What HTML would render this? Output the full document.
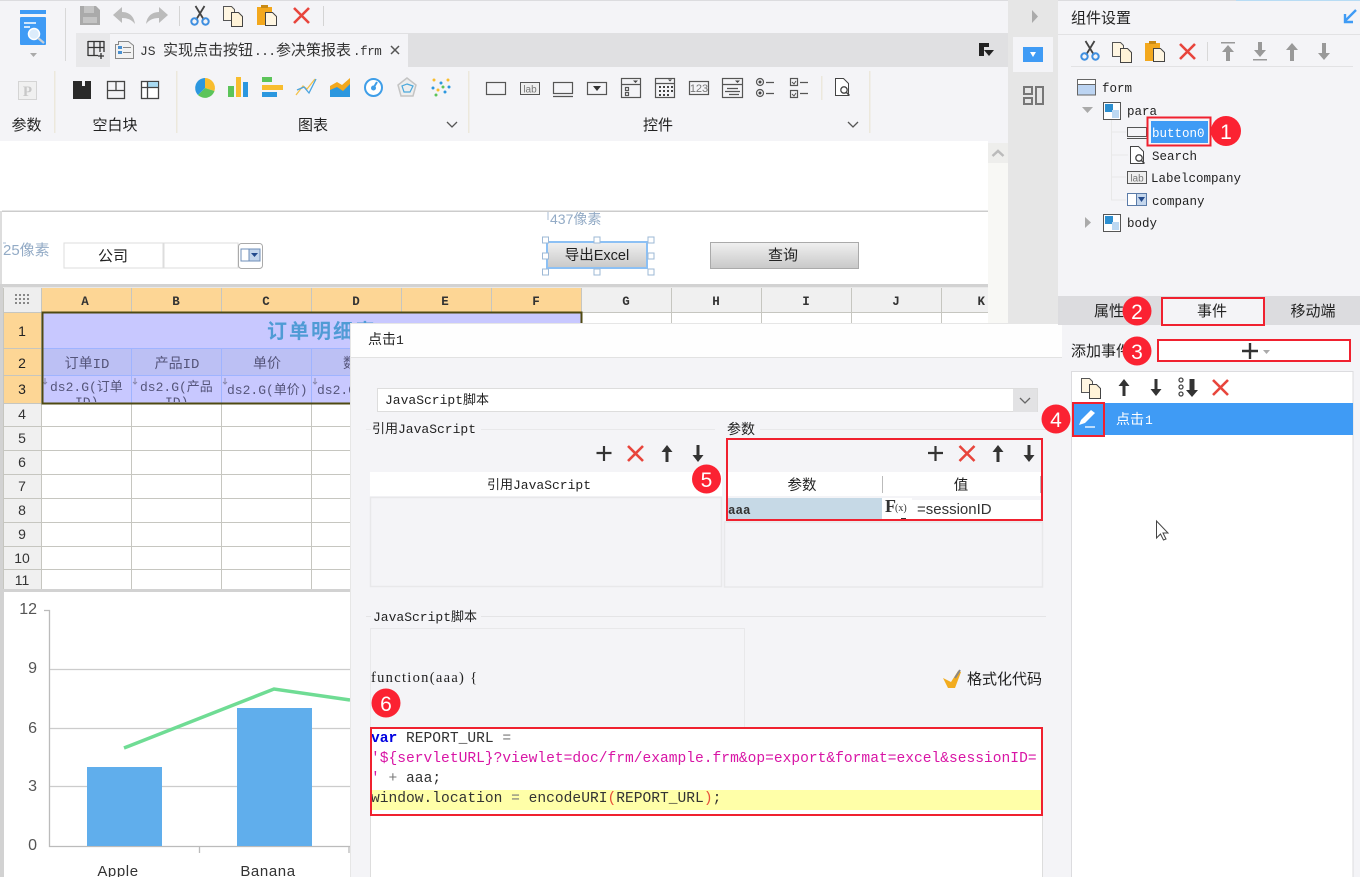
<!DOCTYPE html>
<html lang="zh"><head><meta charset="utf-8"><title>组件设置</title>
<style>
html,body{margin:0;padding:0;width:1360px;height:877px;overflow:hidden;background:#f4f4f7}
svg{display:block;position:absolute;left:0;top:0;filter:blur(.3px)}
text{font-family:"Liberation Sans","Noto Sans CJK SC",sans-serif;fill:#222;font-size:15px}
.m{font-family:"Liberation Mono","Noto Sans CJK SC",monospace;font-size:13px}
.h{font-family:"Liberation Mono","Noto Sans CJK SC",monospace;font-size:12.5px;font-weight:bold;text-anchor:middle;fill:#333}
.c{text-anchor:middle}
.t{font-family:"Liberation Mono","Noto Sans CJK SC",monospace;font-size:12.5px;fill:#222}
.cell{font-family:"Liberation Mono","Noto Sans CJK SC",monospace;font-size:13px;fill:#55557a}
.code{font-family:"Liberation Mono",monospace;font-size:14.6px;fill:#333}
.ax{font-size:16px;fill:#555;text-anchor:end}
.badge{font-size:21px;fill:#fff;text-anchor:middle}
.px{fill:#93abc6;font-size:15px}
</style></head><body>
<svg width="1360" height="877" viewBox="0 0 1360 877" xmlns="http://www.w3.org/2000/svg">
<defs>
<g id="cut"><path d="M5.5 0L14 14M14.5 0L6 14" stroke="#444" stroke-width="1.8" fill="none"/><circle cx="4.5" cy="15.5" r="3.2" fill="none" stroke="#3f8fe0" stroke-width="2"/><circle cx="15.5" cy="15.5" r="3.2" fill="none" stroke="#3f8fe0" stroke-width="2"/></g>
<g id="copy"><path d="M.5.5h8l3 3v11H.5z" fill="#fff6e2" stroke="#555"/><path d="M8.5 6.5h7l4 4v10h-11z" fill="#fff3d8" stroke="#444"/></g>
<g id="paste"><rect x="0" y="2" width="15" height="18" fill="#f3a81d"/><rect x="4" y="0" width="7" height="3" fill="#c98a14"/><path d="M8.5 7.5h7l4 4v9h-11z" fill="#fff6e2" stroke="#444"/></g>
<path id="x" d="M0 0L15 15M15 0L0 15" stroke="#e8453c" stroke-width="2.6" fill="none"/>
<path id="up" d="M6 0L11.500 7H7.500V17H4.500V7H.5z" fill="#333"/>
<path id="down" d="M6 17L11.500 10H7.500V0H4.500V10H.5z" fill="#333"/>
<path id="plus" d="M0 7h15M7.5 0v15" stroke="#333" stroke-width="2.2" fill="none"/>
<g id="blk"><rect x=".5" y=".5" width="17" height="17" fill="#fff" stroke="#555"/><rect x="2" y="2" width="8" height="8" fill="#2d8fd0"/><rect x="9" y="8" width="7" height="8" fill="#bcd8f2"/></g>
<g id="docs"><path d="M.5.5h8l5 5v12H.5z" fill="#fff" stroke="#444"/><circle cx="9" cy="12" r="3.2" fill="#fff" stroke="#444" stroke-width="1.3"/><path d="M11.5 14.5l3 3" stroke="#444" stroke-width="1.5"/></g>
<g id="lab"><rect x=".5" y=".5" width="19" height="12" fill="#eee" stroke="#555"/><text x="10" y="10.5" class="c" style="font-size:10px;fill:#777">lab</text></g>
</defs>

<!-- ===== base ===== -->
<rect width="1360" height="877" fill="#f4f4f7"/>
<rect width="1360" height="1" fill="#dcdcdf"/>
<rect x="1236" y="0" width="124" height="1" fill="#b8dcf4"/>
<rect x="76" y="33" width="934" height="34" fill="#e0e0e2"/>
<rect x="76" y="33" width="34" height="34" fill="#e8e8ea"/>
<rect x="110" y="34" width="298" height="33" fill="#f4f4f7"/>
<rect x="1008" y="0" width="50" height="325" fill="#e6e6e6"/>
<rect x="1013" y="37" width="40" height="35" fill="#f4f4f7"/>

<!-- logo -->
<rect x="20" y="10" width="26" height="4" fill="#3f9bf5"/>
<rect x="20" y="17" width="26" height="28" rx="1" fill="#3f9bf5"/>
<path d="M24 23h12M24 27h6" stroke="#fff" stroke-width="1.4"/>
<circle cx="34" cy="34" r="5.5" fill="#dcecfb" stroke="#fff" stroke-width="1.5"/>
<path d="M38 38l6 5" stroke="#c8d0d8" stroke-width="2.2"/>
<path d="M30 53h7l-3.500 4z" fill="#aaa"/>
<rect x="65" y="8" width="1" height="53" fill="#d8d8d8"/>

<!-- quick tools -->
<path d="M80 6h16l4 4v15H80z" fill="#aaa"/><rect x="84" y="6" width="10" height="7" fill="#c4c4c4"/><rect x="83" y="17" width="14" height="6" fill="#c4c4c4"/>
<path d="M113 15l9-8v5c7 0 12 4 13 12-3-4-7-6-13-6v5z" fill="#bbb"/>
<path d="M168 15l-9-8v5c-7 0-12 4-13 12 3-4 7-6 13-6v5z" fill="#bbb"/>
<rect x="179" y="6" width="1" height="20" fill="#d4d4d4"/>
<use href="#cut" x="190" y="6"/><use href="#copy" x="223" y="6"/><use href="#paste" x="257" y="5"/><use href="#x" x="294" y="8"/>
<rect x="323" y="6" width="1" height="20" fill="#d4d4d4"/>

<!-- tab -->
<path d="M88 41.500h16M88 47.500h16M88 41v15M94 41v15M100 41v11M104 41v11M88 55.500h10M101 53v6M98 56h6" stroke="#333" stroke-width="1.300" fill="none"/>
<path d="M115.500 44.500h3v-3h10l5 4v13h-18z" fill="#f2f2f2" stroke="#888"/><rect x="118" y="46" width="4" height="3" fill="#4a90d0"/><rect x="118" y="51" width="4" height="3" fill="#4a90d0"/><path d="M123 47.500h8M123 52.500h8" stroke="#888"/>
<text x="140" y="55" class="m" style="font-size:13px;fill:#333">JS</text>
<text x="163" y="55" style="font-size:15px;fill:#333">实现点击按钮</text>
<text x="254" y="55" class="m" style="fill:#333;letter-spacing:-.7px">...</text>
<text x="276" y="55" style="font-size:15px;fill:#333">参决策报表</text>
<text x="353" y="55" class="m" style="fill:#333;font-size:12.500px;letter-spacing:-.4px">.frm</text>
<path d="M391 46l8 8M399 46l-8 8" stroke="#555" stroke-width="1.500"/>
<path d="M979 43h10v4h-5v9h-5z" fill="#222"/><path d="M984 50h10l-5 6z" fill="#222"/>

<!-- ribbon: params + blank -->
<rect x="18.500" y="81.500" width="18" height="18" fill="#f0f0f0" stroke="#d4d4d4"/>
<text x="27.500" y="96" class="c" style="font-family:'Liberation Serif',serif;font-weight:bold;font-size:15px;fill:#c8c8c8">P</text>
<rect x="54" y="71" width="1.500" height="62" fill="#ece8dc"/>
<path d="M73 81h9v5h3v-5h6v18H73z" fill="#2a2a2a"/>
<rect x="107.500" y="81.500" width="17" height="17" fill="none" stroke="#444" stroke-width="1.300"/><path d="M107 90.500h18M116 81v9.500" stroke="#444" stroke-width="1.300"/>
<rect x="141.500" y="81.500" width="17" height="17" fill="#fff" stroke="#444" stroke-width="1.300"/><rect x="147" y="82" width="11" height="5" fill="#a8daf2"/><path d="M141 87.500h18M147.500 82v16" stroke="#444" stroke-width="1.300"/>
<rect x="176" y="71" width="1.500" height="62" fill="#ece8dc"/>
<text x="26.500" y="130" class="c">参数</text><text x="115" y="130" class="c">空白块</text><text x="313" y="130" class="c">图表</text><text x="658" y="130" class="c">控件</text>
<path d="M447 122l5 5 5-5M848 122l5 5 5-5" stroke="#555" stroke-width="1.300" fill="none"/>

<!-- chart icons -->
<path d="M205 88V78a10 10 0 0 1 9.500 13z" fill="#f8bd2e"/><path d="M205 88l9.500 3a10 10 0 0 1-16.500 4z" fill="#5cc45a"/><path d="M205 88l-7 7a10 10 0 0 1 7-17z" fill="#2b97df"/>
<rect x="228" y="86" width="6" height="11" fill="#5cc45a"/><rect x="236" y="77" width="5" height="20" fill="#f8bd2e"/><rect x="243" y="82" width="5" height="15" fill="#2b97df"/>
<rect x="262" y="77" width="10" height="5" fill="#5cc45a"/><rect x="262" y="85" width="21" height="5" fill="#f8bd2e"/><rect x="262" y="92" width="15" height="5" fill="#2b97df"/>
<path d="M296 95l7-9 4 3 8-10" stroke="#f4c24a" stroke-width="1.300" fill="none"/><path d="M297 90l7-3 5 6 7-14" stroke="#4aa4e0" stroke-width="1.300" fill="none"/>
<path d="M330 86l7-4 5 3 8-7v19h-20z" fill="#f3a81d"/><path d="M330 90l7-3 6 4 7-7v13h-20z" fill="#2b97df"/>
<circle cx="373.500" cy="87.500" r="8.500" fill="#fff" stroke="#3f9ee8" stroke-width="2"/><circle cx="373.500" cy="88" r="2.500" fill="#3f9ee8"/><path d="M374 87l3-5" stroke="#3f9ee8" stroke-width="2"/>
<path d="M407 78l9 7-3 11h-12l-3-11z" fill="#eee" stroke="#c4c4c4" stroke-width="1.500"/><path d="M407 84l6 2-3 6h-6l-2-6z" fill="none" stroke="#4aa8dc" stroke-width="1.200"/>
<g><circle cx="434" cy="80" r="1.500" fill="#f8bd2e"/><circle cx="441" cy="83" r="1.500" fill="#2b97df"/><circle cx="448" cy="80" r="1.500" fill="#f8bd2e"/><circle cx="433" cy="88" r="1.500" fill="#2b97df"/><circle cx="443" cy="87" r="1.500" fill="#5cc45a"/><circle cx="449" cy="87" r="1.500" fill="#2b97df"/><circle cx="438" cy="90" r="1.500" fill="#f8bd2e"/><circle cx="445" cy="92" r="1.500" fill="#2b97df"/><circle cx="436" cy="95" r="1.500" fill="#5cc45a"/></g>
<rect x="468" y="71" width="1.500" height="62" fill="#ece8dc"/>

<!-- control icons -->
<g fill="none" stroke="#555" stroke-width="1.200">
<rect x="486.500" y="82.500" width="19" height="12"/>
<rect x="553.500" y="82.500" width="19" height="11"/><path d="M553 96.500h20"/>
<rect x="587.500" y="82.500" width="19" height="12"/>
<rect x="621.500" y="78.500" width="19" height="19"/><path d="M621 84.500h20"/><rect x="625.500" y="87.500" width="3" height="3"/><rect x="625.500" y="92.500" width="3" height="3"/>
<rect x="655.500" y="78.500" width="19" height="19"/><path d="M655 83.500h20"/>
<rect x="689.500" y="81.500" width="19" height="13"/>
<rect x="722.500" y="78.500" width="20" height="19"/><path d="M722 84.500h21M727 88.500h11M725 91.500h15M729 94.500h10"/>
<circle cx="760" cy="82" r="3.500"/><circle cx="760" cy="93" r="3.500"/><path d="M766 82.500h8M766 93.500h8"/>
<rect x="790.500" y="78.500" width="7" height="7"/><rect x="790.500" y="90.500" width="7" height="7"/><path d="M800 82.500h8M800 93.500h8"/>
</g>
<use href="#lab" x="520" y="82"/>
<path d="M593 86h8l-4 5z" fill="#333"/>
<path d="M633 80.500h5l-2.500 2.500zM668 79.500h4l-2 2zM735 80.500h5l-2.500 2.500z" fill="#444"/>
<g fill="#444"><rect x="659" y="86" width="2" height="2"/><rect x="663" y="86" width="2" height="2"/><rect x="667" y="86" width="2" height="2"/><rect x="671" y="86" width="2" height="2"/><rect x="659" y="90" width="2" height="2"/><rect x="663" y="90" width="2" height="2"/><rect x="667" y="90" width="2" height="2"/><rect x="671" y="90" width="2" height="2"/><rect x="659" y="94" width="2" height="2"/><rect x="663" y="94" width="2" height="2"/><rect x="667" y="94" width="2" height="2"/><circle cx="760" cy="82" r="1.500"/><circle cx="760" cy="93" r="1.500"/></g>
<text x="699" y="92" class="c" style="font-size:11px;fill:#777">123</text>
<path d="M792 82l2 2 2-3M792 94l2 2 2-3" stroke="#555" fill="none"/>
<rect x="821" y="76" width="1.500" height="24" fill="#ece8dc"/>
<use href="#docs" x="835" y="78"/>
<rect x="869" y="71" width="1.500" height="62" fill="#ece8dc"/>

<!-- side strip -->
<path d="M1032 10l6 6.500-6 6.500z" fill="#aaa"/>
<rect x="1023" y="47" width="20" height="15" fill="#3f9bf5"/><path d="M1030 52h6l-3 5z" fill="#fff"/>
<g fill="none" stroke="#777" stroke-width="2"><rect x="1024" y="87" width="8" height="7"/><rect x="1024" y="98" width="8" height="6"/><rect x="1036" y="87" width="7" height="17"/></g>

<!-- ===== canvas ===== -->
<rect x="0" y="141" width="988" height="450" fill="#fff"/>
<rect x="988" y="143" width="20" height="182" fill="#f8f8f5"/><rect x="988" y="143" width="20" height="20" fill="#eeeeec"/>
<path d="M992.500 156l5.500-5 5.500 5" stroke="#bbb" stroke-width="2.500" fill="none"/>
<rect x="2" y="210.500" width="986" height="1.500" fill="#ccc"/>
<rect x="0" y="211" width="2" height="75" fill="#ddd"/>

<!-- para pane -->
<path d="M548 212v8" stroke="#a9bdd4"/>
<text x="550" y="224" class="px" style="font-size:14px">437像素</text>
<path d="M3 243h3" stroke="#a9bdd4"/>
<text x="3" y="255" class="px" style="font-size:15px">25像素</text>
<rect x="64" y="243" width="99" height="25" fill="#fff" stroke="#ddd"/>
<text x="113" y="261" class="c">公司</text>
<rect x="164" y="243" width="74" height="25" fill="#fff" stroke="#ddd"/>
<rect x="238.500" y="243.500" width="24" height="25" rx="3" fill="#fff" stroke="#aaa"/>
<rect x="241" y="249" width="8" height="12" fill="#fff" stroke="#6f8fb8"/><rect x="249" y="249" width="11" height="12" fill="#c4d6ec" stroke="#6f8fb8"/><path d="M251 253h7l-3.500 4z" fill="#234a8c"/>

<linearGradient id="btn" x1="0" y1="0" x2="0" y2="1"><stop offset="0" stop-color="#f0f0f0"/><stop offset="1" stop-color="#c8c8c8"/></linearGradient>
<rect x="547" y="242" width="100" height="26" fill="url(#btn)" stroke="#8cc0f4" stroke-width="2"/>
<text x="597" y="260" class="c" style="font-size:14.500px">导出Excel</text>
<g fill="#fff" stroke="#9db8d6"><rect x="542.500" y="237" width="6" height="6"/><rect x="594" y="237" width="6" height="6"/><rect x="648" y="237" width="6" height="6"/><rect x="542.500" y="253" width="6" height="6"/><rect x="648" y="253" width="6" height="6"/><rect x="542.500" y="269" width="6" height="6"/><rect x="594" y="269" width="6" height="6"/><rect x="648" y="269" width="6" height="6"/></g>
<rect x="710.500" y="242.500" width="148" height="26" fill="url(#btn)" stroke="#aaa"/>
<text x="783" y="260" class="c">查询</text>

<!-- grid -->
<rect x="0" y="284" width="988" height="3.500" fill="#d2d2d2"/>
<rect x="0" y="284" width="3" height="306" fill="#d2d2d2"/>
<rect x="3" y="288" width="39" height="25" fill="#eeeeee"/>
<rect x="42" y="288" width="540" height="24" fill="#fdd695"/>
<rect x="582" y="288" width="406" height="24" fill="#f0f0f0"/>
<rect x="3" y="312" width="39" height="91" fill="#fdd695"/>
<rect x="3" y="403" width="39" height="187" fill="#f0f0f0"/>
<g fill="#888"><rect x="15" y="294" width="2" height="2"/><rect x="19" y="294" width="2" height="2"/><rect x="23" y="294" width="2" height="2"/><rect x="27" y="294" width="2" height="2"/><rect x="15" y="298" width="2" height="2"/><rect x="19" y="298" width="2" height="2"/><rect x="23" y="298" width="2" height="2"/><rect x="27" y="298" width="2" height="2"/><rect x="15" y="302" width="2" height="2"/><rect x="19" y="302" width="2" height="2"/><rect x="23" y="302" width="2" height="2"/><rect x="27" y="302" width="2" height="2"/></g>
<g stroke="#c6c6c0" fill="none">
<path d="M3.500 288V590M41.500 288V590M131.500 288V590M221.500 288V590M311.500 288V590M401.500 288V590M491.500 288V590M581.500 288V590M671.500 288V325M761.500 288V325M851.500 288V325M941.500 288V325"/>
<path d="M3 312.500H988M3 348.500H42M3 375.500H42M3 403.500H582M3 426.500H350M3 450.500H350M3 474.500H350M3 498.500H350M3 522.500H350M3 546.500H350M3 569.500H350"/>
</g>
<text x="85" y="305" class="h">A</text><text x="176" y="305" class="h">B</text><text x="266" y="305" class="h">C</text><text x="356" y="305" class="h">D</text><text x="445" y="305" class="h">E</text><text x="536" y="305" class="h">F</text><text x="626" y="305" class="h">G</text><text x="716" y="305" class="h">H</text><text x="806" y="305" class="h">I</text><text x="896" y="305" class="h">J</text><text x="985" y="305" class="h" style="text-anchor:end">K</text>
<g style="font-size:14px">
<text x="22" y="336" class="c" style="font-size:14px">1</text><text x="22" y="368" class="c" style="font-size:14px">2</text><text x="22" y="394" class="c" style="font-size:14px">3</text>
<text x="22" y="419" class="c" style="font-size:14px;fill:#333">4</text><text x="22" y="443" class="c" style="font-size:14px;fill:#333">5</text><text x="22" y="467" class="c" style="font-size:14px;fill:#333">6</text><text x="22" y="491" class="c" style="font-size:14px;fill:#333">7</text><text x="22" y="515" class="c" style="font-size:14px;fill:#333">8</text><text x="22" y="539" class="c" style="font-size:14px;fill:#333">9</text><text x="22" y="563" class="c" style="font-size:14px;fill:#333">10</text><text x="22" y="585" class="c" style="font-size:14px;fill:#333">11</text>
</g>

<!-- styled table -->
<rect x="43" y="313" width="538" height="90" fill="#c8c8ff"/>
<rect x="43" y="349" width="538" height="27" fill="#bcc0f4"/>
<path d="M43 348.500H581M43 375.500H581M131.500 349V403M221.500 349V403M311.500 349V403M401.500 349V403M491.500 349V403" stroke="#9fb4ff"/>
<text x="267" y="338" style="font-size:20px;font-weight:bold;fill:#4f9bd5;letter-spacing:2px">订单明细表</text>
<text x="87" y="368" class="c cell" style="font-size:14px">订单ID</text><text x="177" y="368" class="c cell" style="font-size:14px">产品ID</text><text x="267" y="368" class="c cell" style="font-size:14px">单价</text><text x="357" y="368" class="c cell" style="font-size:14px">数量</text>
<clipPath id="r3"><rect x="43" y="376" width="538" height="26"/></clipPath>
<g clip-path="url(#r3)">
<text x="50" y="391" class="cell">ds2.G(订单</text><text x="75" y="406" class="cell">ID)</text>
<text x="140" y="391" class="cell">ds2.G(产品</text><text x="165" y="406" class="cell">ID)</text>
<text x="227" y="394" class="cell">ds2.G(单价)</text><text x="317" y="394" class="cell">ds2.G(数量)</text>
<path d="M45 378v6m-2-2l2 2 2-2M135 378v6m-2-2l2 2 2-2M225 378v6m-2-2l2 2 2-2M315 378v6m-2-2l2 2 2-2" stroke="#8888aa" fill="none"/>
</g>
<rect x="42.500" y="312.500" width="539" height="91" fill="none" stroke="#4f4a12" stroke-width="2"/>

<!-- chart -->
<rect x="3" y="589" width="347" height="3.500" fill="#d2d2d2"/>
<rect x="0" y="589" width="4" height="288" fill="#d2d2d2"/>
<rect x="4" y="592" width="346" height="285" fill="#fff"/>
<path d="M49 669.500H350M49 728.500H350M49 786.500H350" stroke="#ccc" stroke-width="1.300"/>
<path d="M44 610.500h5.500V846.500H350M199.500 847v6M349 847v6" stroke="#bbb" stroke-width="1.300" fill="none"/>
<rect x="87" y="767" width="75" height="79" fill="#60aeec"/><rect x="237" y="708" width="75" height="138" fill="#60aeec"/>
<path d="M124 748L274 689L350 700" fill="none" stroke="#6fdc94" stroke-width="3.500"/>
<text x="37" y="614" class="ax">12</text><text x="37" y="673" class="ax">9</text><text x="37" y="733" class="ax">6</text><text x="37" y="791" class="ax">3</text><text x="37" y="850" class="ax">0</text>
<text x="118" y="876" class="c" style="font-size:15px;fill:#333;letter-spacing:.6px">Apple</text><text x="268" y="876" class="c" style="font-size:15px;fill:#333;letter-spacing:.6px">Banana</text>

<!-- ===== dialog ===== -->
<rect x="350" y="323" width="712" height="554" fill="#f4f4f7"/>
<rect x="350" y="323" width="712" height="34" fill="#fefefe"/>
<path d="M350 357.500H1062" stroke="#e2e2e2"/>
<path d="M350.500 323V877M350 323.500H1062" stroke="#e6e6e6"/>
<text x="368" y="344" style="font-size:14px">点击</text><text x="396" y="344" class="m" style="font-size:13px">1</text>

<rect x="377.500" y="388.500" width="660" height="23" fill="#fff" stroke="#ddd"/>
<rect x="1013" y="389" width="24" height="23" fill="#e2e2e4"/>
<path d="M1020 398l5 5 5-5" stroke="#666" stroke-width="1.300" fill="none"/>
<text x="385" y="404" class="m">JavaScript脚本</text>

<path d="M366 429.500H715M760 429.500H1060" stroke="#e8e8ea"/>
<rect x="371" y="420" width="110" height="17" fill="#f4f4f7"/>
<text x="372" y="433" class="m">引用JavaScript</text>
<text x="727" y="434" style="font-size:14px">参数</text>

<use href="#plus" x="596.500" y="446"/><use href="#x" x="628" y="446"/><use href="#up" x="661" y="445"/><use href="#down" x="692" y="445"/>
<use href="#plus" x="928" y="446"/><use href="#x" x="959.500" y="446"/><use href="#up" x="992" y="445"/><use href="#down" x="1023" y="445"/>

<rect x="370" y="472" width="352" height="24" fill="#fff"/>
<text x="539" y="489" class="c m">引用JavaScript</text>
<rect x="370.500" y="497.500" width="351" height="89" fill="#f4f4f7" stroke="#e8e8ea" stroke-width="1.500"/>

<rect x="724.500" y="522" width="318" height="65" fill="#f4f4f7" stroke="#e8e8ea" stroke-width="1.500"/>
<rect x="727" y="472" width="314" height="24" fill="#fff"/>
<path d="M882.500 476v17M1040.500 476v17" stroke="#bbb"/>
<text x="802" y="490" class="c" style="font-size:14.500px">参数</text><text x="961" y="490" class="c" style="font-size:14.500px">值</text>
<rect x="727" y="498" width="155" height="22" fill="#c6d9e6"/>
<rect x="882" y="498" width="30" height="22" fill="#fff"/><rect x="912" y="500" width="128" height="20" fill="#fff"/>
<text x="728" y="514" class="m" style="font-size:12.500px;font-weight:bold;fill:#333">aaa</text>
<text x="885" y="512" style="font-family:'Liberation Serif',serif;font-size:18px;font-weight:bold;fill:#333">F</text><text x="895" y="511" style="font-family:'Liberation Serif',serif;font-size:10px;fill:#333">(x)</text>
<rect x="901" y="518" width="5" height="2" fill="#333"/>
<text x="917" y="514" style="font-size:15px;fill:#333">=sessionID</text>

<path d="M366 616.500H1046" stroke="#e4e4e6"/>
<rect x="371" y="608" width="110" height="17" fill="#f4f4f7"/>
<text x="373" y="621" class="m">JavaScript脚本</text>
<rect x="370.500" y="628.500" width="374" height="110" fill="#f4f4f7" stroke="#e8e8ea"/>
<text x="371" y="682" style="font-family:'Liberation Serif',serif;font-size:14.500px;fill:#222;letter-spacing:1.300px">function(aaa) {</text>
<path d="M943 678l8 4 7-11 3 1-6 16h-7z" fill="#f2ac1f"/><path d="M955 678l5-8" stroke="#888" stroke-width="2"/>
<text x="967" y="684" style="font-size:15px">格式化代码</text>

<rect x="370" y="728" width="673" height="149" fill="#fff"/>
<rect x="371" y="790" width="671" height="20" fill="#ffffa8"/>
<path d="M370.500 728V877M1042.500 816V877" stroke="#ddd"/>
<text x="371" y="742" class="code"><tspan fill="#0000e0" font-weight="bold">var</tspan> REPORT_URL <tspan fill="#777">=</tspan></text>
<text x="371" y="762" class="code" style="fill:#d815a5">'${servletURL}?viewlet=doc/frm/example.frm&amp;op=export&amp;format=excel&amp;sessionID=</text>
<text x="371" y="782" class="code"><tspan fill="#d815a5">'</tspan> <tspan fill="#777">+</tspan> aaa;</text>
<text x="371" y="802" class="code">window.location <tspan fill="#777">=</tspan> encodeURI<tspan fill="#e8503a">(</tspan>REPORT_URL<tspan fill="#e8503a">)</tspan>;</text>

<!-- ===== right panel ===== -->
<text x="1071" y="23">组件设置</text>
<path d="M1345 21l11-11M1345 14v8h8" stroke="#3f9bf5" stroke-width="2.400" fill="none"/>
<path d="M1058 34.500H1360" stroke="#e2e2e4"/>
<use href="#cut" x="1080" y="41"/><use href="#copy" x="1112" y="42"/><use href="#paste" x="1145" y="41"/><use href="#x" x="1180" y="44"/>
<rect x="1207" y="42" width="1" height="19" fill="#d8d8d8"/>
<g fill="#999"><rect x="1221" y="42" width="14" height="1.500"/><path d="M1228 45l6 7h-4v9h-4v-9h-4z"/><path d="M1260 57l6-7h-4v-8h-4v8h-4z"/><rect x="1253" y="59" width="14" height="1.500"/><path d="M1292 43l6 7h-4v11h-4V50h-4z"/><path d="M1324 60l6-7h-4V43h-4v10h-4z"/></g>
<path d="M1071 66.500H1353" stroke="#e2e2e4"/>

<rect x="1077.500" y="79.500" width="18" height="15.500" fill="#bcd4f2" stroke="#666"/><rect x="1078" y="80" width="17" height="4" fill="#fff"/><path d="M1077 84.500h19" stroke="#666"/>
<text x="1102" y="92" class="t">form</text>
<path d="M1082 107h11l-5.500 6z" fill="#aaa"/>
<use href="#blk" x="1103" y="102"/>
<text x="1127" y="115" class="t">para</text>
<path d="M1111.500 120V200M1111 132h15M1111 155h17M1111 177h15M1111 200h15" stroke="#e8e8e8" fill="none"/>
<rect x="1127.500" y="127.500" width="19" height="9" fill="#f4f4f7" stroke="#555"/><path d="M1127 138.500h20" stroke="#555"/>
<rect x="1147.500" y="117.500" width="63" height="28" fill="none" stroke="#f0212f" stroke-width="2"/>
<rect x="1151" y="121" width="57" height="22" fill="#3f9bf5"/>
<text x="1152" y="137" class="t" style="fill:#fff">button0</text>
<use href="#docs" x="1130" y="146"/>
<text x="1152" y="160" class="t">Search</text>
<use href="#lab" x="1127" y="171"/>
<text x="1151" y="182" class="t">Labelcompany</text>
<rect x="1127.500" y="193.500" width="9" height="12" fill="#fff" stroke="#5a7ba8"/><rect x="1136.500" y="193.500" width="10" height="12" fill="#c4d6ec" stroke="#5a7ba8"/><path d="M1138 197h7l-3.500 5z" fill="#234a8c"/>
<text x="1152" y="205" class="t">company</text>
<path d="M1085 217l6 5.500-6 5.500z" fill="#aaa"/>
<use href="#blk" x="1103" y="214"/>
<text x="1127" y="227" class="t">body</text>

<!-- tabs -->
<rect x="1058" y="296" width="302" height="29" fill="#dcdcdf"/>
<rect x="1062" y="325" width="298" height="552" fill="#f4f4f7"/>
<rect x="1162" y="298" width="102" height="27" fill="#f4f4f7" stroke="#f0212f" stroke-width="2"/>
<text x="1109" y="316" class="c">属性</text><text x="1212" y="316" class="c">事件</text><text x="1313" y="316" class="c">移动端</text>
<text x="1071" y="356">添加事件</text>
<rect x="1158" y="340" width="192" height="21" fill="#fff" stroke="#f0212f" stroke-width="2"/>
<path d="M1242 351h16M1250 343v16" stroke="#333" stroke-width="2.400"/><path d="M1263 350h7l-3.500 4z" fill="#aaa"/>
<rect x="1071.500" y="371.500" width="281.500" height="506" fill="#fff" stroke="#dcdcdf"/>
<use href="#copy" x="1081" y="378"/><use href="#up" x="1118" y="379"/><use href="#down" x="1150" y="379"/>
<g fill="none" stroke="#444" stroke-width="1.300"><circle cx="1181" cy="380" r="2"/><circle cx="1181" cy="387" r="2"/><circle cx="1181" cy="394" r="2"/></g>
<path d="M1192 397l6-7h-3.500v-11h-5v11H1186z" fill="#333"/>
<use href="#x" x="1213" y="380"/>
<rect x="1072" y="403" width="281" height="32" fill="#3f9bf5"/>
<text x="1116" y="424" style="font-size:14px;fill:#fff">点击</text><text x="1145" y="424" class="m" style="fill:#fff">1</text>
<rect x="1073" y="403" width="31" height="33" fill="none" stroke="#f0212f" stroke-width="2"/>
<path d="M1079 425l2-5 10-10 4 3-10 10z" fill="#fff"/><path d="M1085 427h10" stroke="#fff" stroke-width="1.300"/>
<path d="M1156.500 521v17l4-4 3 6 2.500-1-3-6h5z" fill="#fff" stroke="#444"/>

<!-- dialog red boxes -->
<rect x="727" y="439" width="315" height="81" fill="none" stroke="#f0212f" stroke-width="2"/>
<rect x="371" y="728" width="671" height="87" fill="none" stroke="#f0212f" stroke-width="2"/>

<!-- badges -->
<g fill="#fb2232"><circle cx="1226" cy="131" r="15"/><circle cx="1137" cy="311" r="14.500"/><circle cx="1137" cy="351" r="14.500"/><circle cx="1056" cy="419" r="14.500"/><circle cx="706.500" cy="479" r="14.500"/><circle cx="386" cy="703" r="14.500"/></g>
<text x="1226" y="139" class="badge">1</text><text x="1137" y="319" class="badge">2</text><text x="1137" y="359" class="badge">3</text><text x="1056" y="427" class="badge">4</text><text x="706.500" y="487" class="badge">5</text><text x="386" y="711" class="badge">6</text>
</svg>
</body></html>
